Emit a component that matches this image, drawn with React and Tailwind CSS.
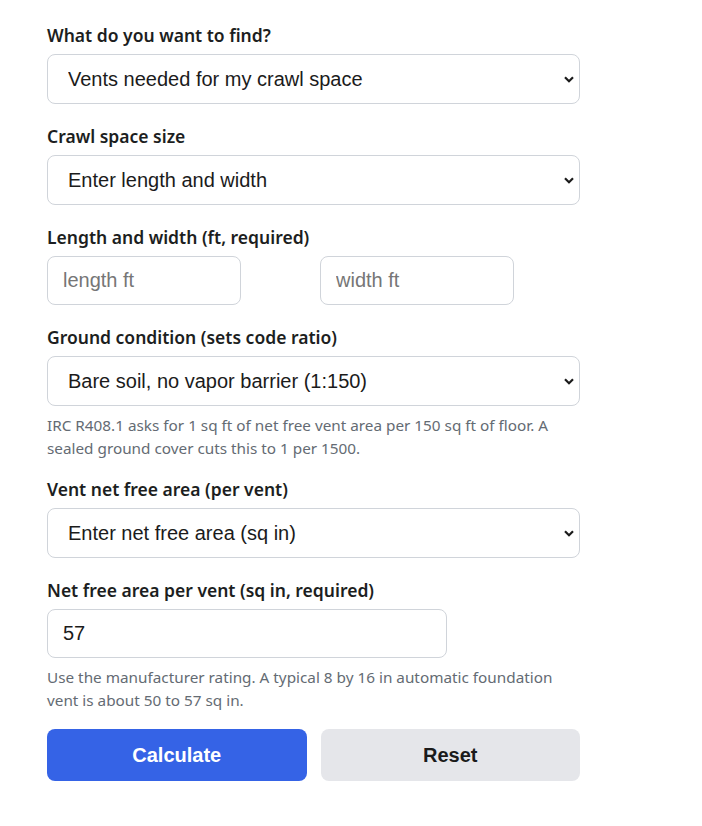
import React, { useState } from 'react';

const labelCls = "block text-[17.5px] leading-6 font-semibold text-[#1c1e21] mb-[7px] font-['Noto_Sans',sans-serif]";
const boxCls = "border border-[#d0d4da] rounded-lg bg-white text-xl text-[#1b1b1b] font-['Liberation_Sans',Arial,sans-serif] outline-none";
const helpCls = "mt-2 text-[15.3px] leading-[22.5px] text-[#646b73] font-['Noto_Sans',sans-serif]";

const Chevron = () => (
  <svg width="12" height="12" viewBox="0 0 12 12" className="absolute right-[5px] top-1/2 -translate-y-1/2 pointer-events-none">
    <path d="M2 4.2 L6 8.2 L10 4.2" fill="none" stroke="#1b1b1b" strokeWidth="2.2" />
  </svg>
);

const Select = ({ value, options, onChange }) => (
  <div className="relative">
    <select
      value={value}
      onChange={(e) => onChange(e.target.value)}
      className={`${boxCls} appearance-none w-full h-[50px] pl-5 pr-8`}
    >
      {options.map((o) => (
        <option key={o}>{o}</option>
      ))}
    </select>
    <Chevron />
  </div>
);

export default function App() {
  const [mode, setMode] = useState('Vents needed for my crawl space');
  const [size, setSize] = useState('Enter length and width');
  const [ground, setGround] = useState('Bare soil, no vapor barrier (1:150)');
  const [vent, setVent] = useState('Enter net free area (sq in)');
  const [length, setLength] = useState('');
  const [width, setWidth] = useState('');
  const [area, setArea] = useState('57');

  return (
    <div className="bg-white min-h-screen pl-[47px] pt-[23px]">
      <div className="w-[533px]">
        <div className="mb-5">
          <label className={labelCls}>What do you want to find?</label>
          <Select value={mode} onChange={setMode} options={['Vents needed for my crawl space', 'Crawl space area my vents cover']} />
        </div>

        <div className="mb-5">
          <label className={labelCls}>Crawl space size</label>
          <Select value={size} onChange={setSize} options={['Enter length and width', 'Enter total area (sq ft)']} />
        </div>

        <div className="mb-5">
          <label className={labelCls}>Length and width (ft, required)</label>
          <div className="flex gap-[79px]">
            <input
              value={length}
              onChange={(e) => setLength(e.target.value)}
              placeholder="length ft"
              className={`${boxCls} w-[194px] h-[49px] px-[15px] placeholder:text-[#767676]`}
            />
            <input
              value={width}
              onChange={(e) => setWidth(e.target.value)}
              placeholder="width ft"
              className={`${boxCls} w-[194px] h-[49px] px-[15px] placeholder:text-[#767676]`}
            />
          </div>
        </div>

        <div className="mb-[18px]">
          <label className={labelCls}>Ground condition (sets code ratio)</label>
          <Select value={ground} onChange={setGround} options={['Bare soil, no vapor barrier (1:150)', 'Sealed vapor barrier (1:1500)']} />
          <p className={helpCls}>
            IRC R408.1 asks for 1 sq ft of net free vent area per 150 sq ft of floor. A sealed ground cover cuts this to 1 per 1500.
          </p>
        </div>

        <div className="mb-5">
          <label className={labelCls}>Vent net free area (per vent)</label>
          <Select value={vent} onChange={setVent} options={['Enter net free area (sq in)', '8 x 16 foundation vent']} />
        </div>

        <div className="mb-[18px]">
          <label className={labelCls}>Net free area per vent (sq in, required)</label>
          <input
            value={area}
            onChange={(e) => setArea(e.target.value)}
            className={`${boxCls} w-[400px] h-[49px] px-[15px]`}
          />
          <p className={helpCls}>
            Use the manufacturer rating. A typical 8 by 16 in automatic foundation vent is about 50 to 57 sq in.
          </p>
        </div>

        <div className="flex gap-[14px]">
          <button className="flex-1 h-[52px] rounded-lg bg-[#3563e6] text-white text-xl font-bold font-['Liberation_Sans',Arial,sans-serif]">
            Calculate
          </button>
          <button
            className="flex-1 h-[52px] rounded-lg bg-[#e5e6ea] text-[#1b1b1b] text-xl font-bold font-['Liberation_Sans',Arial,sans-serif]"
            onClick={() => { setLength(''); setWidth(''); setArea(''); }}
          >
            Reset
          </button>
        </div>
      </div>
    </div>
  );
}
